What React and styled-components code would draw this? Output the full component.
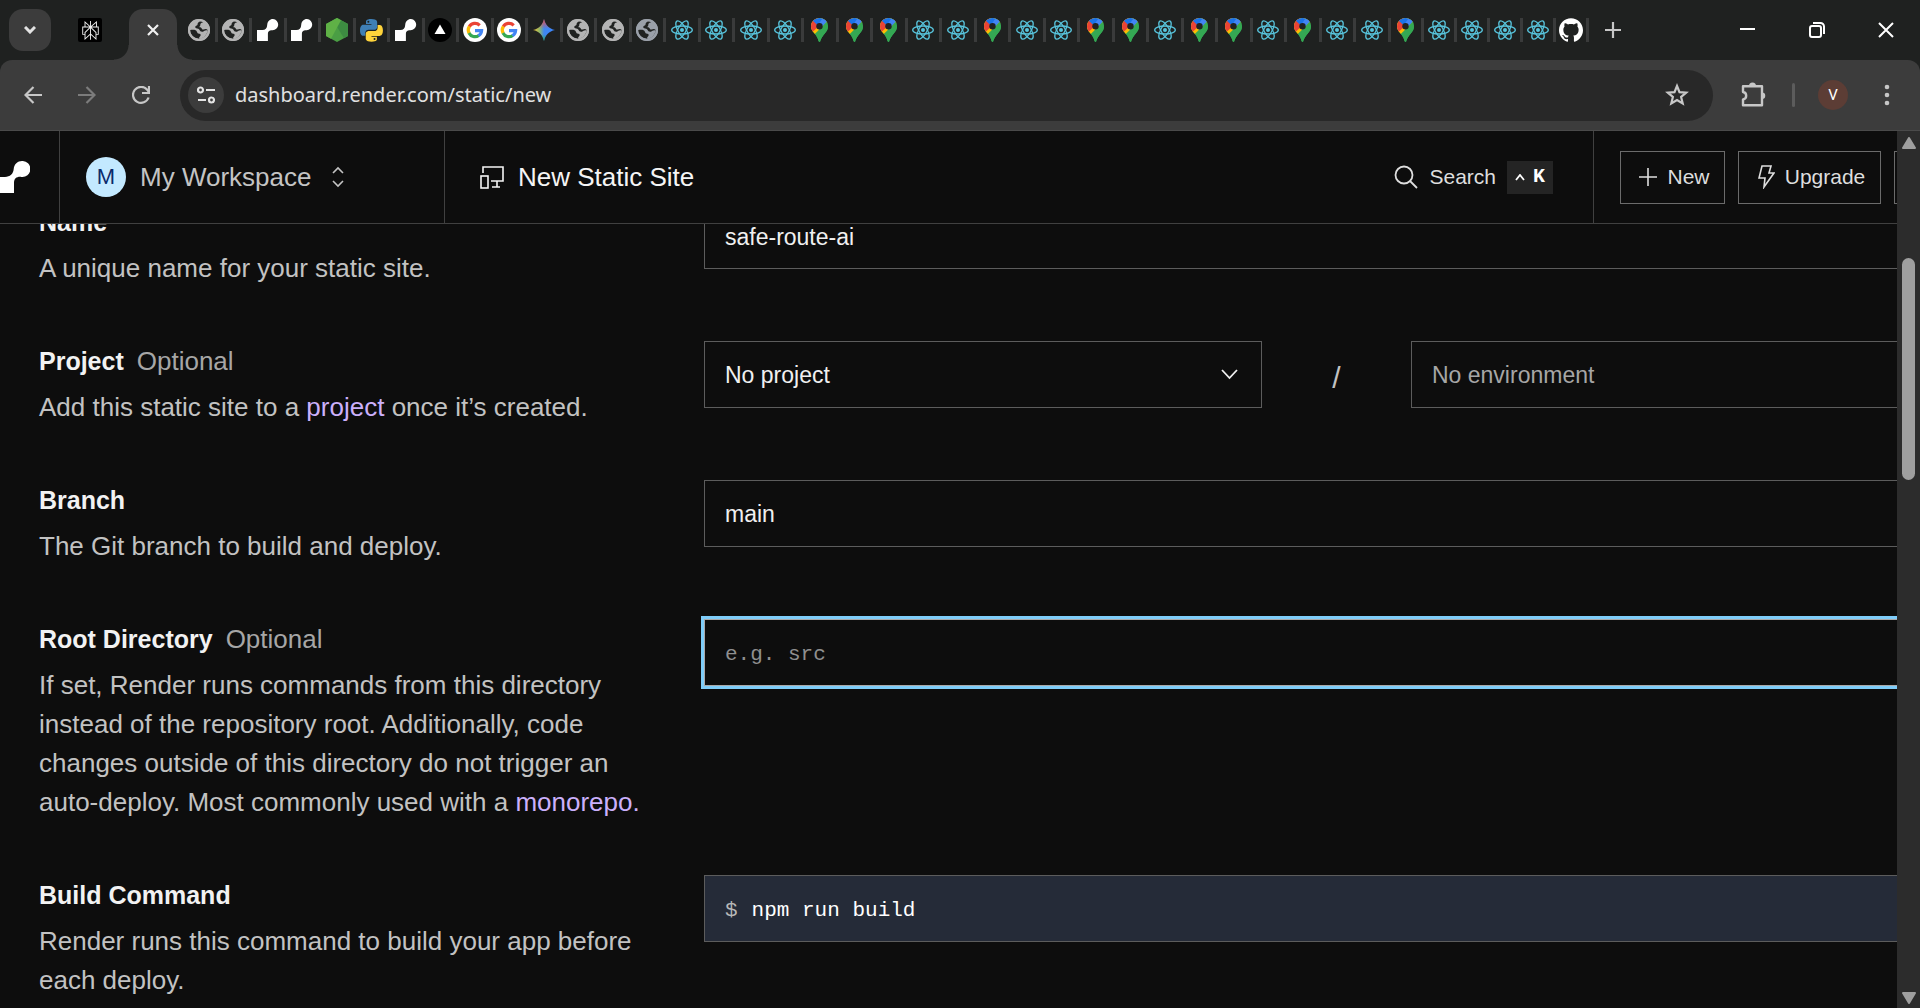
import React from "react";
import styled, { createGlobalStyle, css } from "styled-components";
import { SiPerplexity, SiGithub } from "react-icons/si";

const sans = '"Liberation Sans", Arial, Helvetica, sans-serif';
const mono = '"Liberation Mono", "Courier New", monospace';
const chromeFont = '"Noto Sans", "Open Sans", sans-serif';

const GlobalStyle = createGlobalStyle`
  * { box-sizing: border-box; }
  body { margin: 0; background: #0d0d0d; overflow: hidden; }
  button, input, select { font: inherit; color: inherit; margin: 0; }
  svg { display: block; flex: none; }
`;

const Window = styled.div`
  display: flex;
  flex-direction: column;
  height: 100vh;
  overflow: hidden;
  background: #0d0d0d;
  font-family: ${sans};
`;

/* ---------- browser tab strip ---------- */

const TabStrip = styled.header`
  display: flex;
  flex: none;
  height: 60px;
  padding-left: 9px;
  background: #1f2120;
`;

const BareButton = styled.button`
  display: flex;
  align-items: center;
  justify-content: center;
  flex: none;
  padding: 0;
  border: 0;
  background: none;
  color: ${(p) => p.$color || "#c7c7c7"};
  width: ${(p) => p.$w}px;
`;

const TabSearch = styled(BareButton)`
  height: 42px;
  margin-top: 9px;
  border-radius: 14px;
  background: #3c3c3c;
`;

const PinnedTab = styled(BareButton)`
  height: 60px;
`;

const PinnedIcon = styled.span`
  display: grid;
  place-items: center;
  width: 24px;
  height: 24px;
  border-radius: 2px;
  background: #000;
`;

const ActiveTab = styled.div`
  position: relative;
  display: flex;
  justify-content: center;
  flex: none;
  width: 48px;
  height: 51px;
  margin: 9px 6px 0 0;
  border-radius: 14px 14px 0 0;
  background: #3c3c3c;

  &::before,
  &::after {
    content: "";
    position: absolute;
    bottom: 0;
    width: 15px;
    height: 15px;
  }
  &::before {
    right: 100%;
    background: radial-gradient(circle at 0 0, transparent 14px, #3c3c3c 15px);
  }
  &::after {
    left: 100%;
    background: radial-gradient(circle at 100% 0, transparent 14px, #3c3c3c 15px);
  }
`;

const CloseTab = styled(BareButton)`
  height: 42px;
`;

const Tabs = styled.nav`
  display: flex;
  flex: 1;
  min-width: 0;
  height: 24px;
  margin-top: 18px;
`;

const Tab = styled.button`
  display: flex;
  align-items: center;
  justify-content: center;
  flex: ${(p) => (p.$narrow ? 66 : 69)} 1 0;
  min-width: 0;
  height: 24px;
  padding: 0;
  border: 0;
  border-right: 3px solid #3a3b3b;
  background: none;
`;

const WindowButtons = styled.div`
  display: flex;
  gap: 0;
  flex: none;
`;

const NewTab = styled(BareButton)`
  margin-right: 76px;
`;

/* ---------- browser toolbar ---------- */

const Backdrop = styled.div`
  flex: none;
  background: #1f2120;
`;

const Toolbar = styled.div`
  display: flex;
  align-items: center;
  height: 71px;
  padding: 0 6px;
  border-bottom: 1px solid #4a4a4a;
  border-radius: 12px 12px 0 0;
  background: #3c3c3c;
`;

const AddressBar = styled.div`
  display: flex;
  align-items: center;
  flex: 1;
  height: 51px;
  margin: 0 13px 0 12px;
  padding: 0 8px;
  border-radius: 26px;
  background: #282828;
`;

const SiteInfo = styled(BareButton)`
  height: 36px;
  border-radius: 50%;
  background: #3c3c3c;
`;

const AddressInput = styled.input`
  flex: 1;
  min-width: 0;
  padding: 0 11px;
  border: 0;
  outline: 0;
  background: none;
  color: #e0e0e0;
  font: 20px/28px ${chromeFont};
`;

const ToolbarDivider = styled.span`
  width: 3px;
  height: 24px;
  margin: 0 11px 0 12px;
  border-radius: 2px;
  background: #5c5c5c;
`;

const Profile = styled.span`
  display: grid;
  place-items: center;
  width: 30px;
  height: 30px;
  border-radius: 50%;
  background: #5c3d35;
  color: #fff;
  font: 15px/20px Roboto, sans-serif;
`;

/* ---------- page ---------- */

const Viewport = styled.div`
  display: flex;
  flex: 1;
  min-height: 0;
`;

const Page = styled.div`
  display: flex;
  flex-direction: column;
  flex: 1;
  min-width: 0;
  overflow: hidden;
`;

const Header = styled.header`
  display: flex;
  flex: none;
  height: 93px;
  border-bottom: 1px solid #404040;
  background: #0d0d0d;
  color: #f5f5f5;
`;

const LogoCell = styled.a`
  display: flex;
  align-items: center;
  flex: none;
  width: 60px;
  border-right: 1px solid #404040;
`;

const Workspace = styled.button`
  display: flex;
  align-items: center;
  flex: none;
  width: 385px;
  padding: 0 26px;
  border: 0;
  border-right: 1px solid #404040;
  background: none;
  color: #c4c4c4;
  font-size: 26px;
  line-height: 40px;
`;

const Initial = styled.span`
  display: grid;
  place-items: center;
  width: 40px;
  height: 40px;
  margin-right: 14px;
  border-radius: 50%;
  background: #c3e9ff;
  color: #0a2a6b;
  font-size: 22px;
  line-height: 40px;
`;

const SortIcon = styled.svg`
  margin-left: 20px;
`;

const Title = styled.h1`
  display: flex;
  align-items: center;
  gap: 13px;
  flex: 1;
  margin: 0;
  padding-left: 35px;
  font-size: 26px;
  font-weight: 400;
  line-height: 40px;
`;

const Search = styled.button`
  display: flex;
  align-items: center;
  gap: 11px;
  padding: 0 40px 0 0;
  border: 0;
  border-right: 1px solid #404040;
  background: none;
  color: #dedede;
  font-size: 21px;
`;

const Shortcut = styled.kbd`
  display: flex;
  align-items: center;
  justify-content: center;
  gap: 8px;
  width: 46px;
  height: 33px;
  background: #242424;
  color: #fff;
  font: 700 20px/24px ${mono};
`;

const Actions = styled.div`
  display: flex;
  align-items: center;
  gap: 13px;
  flex: none;
  width: 303px;
  padding-left: 26px;
  overflow: hidden;
`;

const ActionButton = styled.button`
  display: flex;
  align-items: center;
  justify-content: center;
  gap: 10px;
  flex: none;
  width: ${(p) => p.$w}px;
  height: 53px;
  padding: 0 0 0 4px;
  border: 1px solid #6b6b6b;
  background: none;
  color: #dedede;
  font-size: 21px;
`;

/* ---------- form ---------- */

const Main = styled.main`
  flex: 1;
  min-height: 0;
  overflow: hidden;
`;

/* scrolled down far enough that the first row slips under the header */
const Form = styled.form`
  display: grid;
  row-gap: 54px;
  width: calc(100% + 111px);
  margin-top: -22px;
  padding: 0 39px;
`;

const Row = styled.div`
  display: grid;
  grid-template-columns: 610px 1fr;
  column-gap: 55px;
  align-items: start;
`;

const Copy = styled.div`
  display: grid;
  row-gap: 7px;
  padding-top: 1px;
  margin-bottom: -1px;
  color: #c2c2c2;
  font-size: 26px;
  line-height: 39px;
`;

const Label = styled.label`
  color: #f2f2f2;
  font-size: 25px;
  font-weight: 700;
`;

const Optional = styled.span`
  margin-left: 13px;
  color: #a6a6a6;
  font-size: 26px;
  font-weight: 400;
`;

const Description = styled.p`
  margin: 0;
`;

const Link = styled.a`
  color: #cbb0fb;
  text-decoration: none;
`;

const fieldBox = css`
  display: block;
  width: 100%;
  height: 67px;
  padding: 0 20px;
  border: 1px solid #5c5c5c;
  border-radius: 0;
  outline: 0;
  background: #0d0d0d;
  color: #f0f0f0;
`;

const TextField = styled.input`
  ${fieldBox}
  padding-top: 4px;
  font: ${(p) => (p.$mono ? `21px/32px ${mono}` : `23px/32px ${sans}`)};
  ${(p) => p.$focused && "border-color: #a9a9a9; box-shadow: 0 0 0 3px #7fcdf9;"}

  &::placeholder {
    color: #8f8f8f;
    opacity: 1;
  }
`;

const Pickers = styled.div`
  display: grid;
  grid-template-columns: 1fr 149px 1fr;
  align-items: center;
`;

const Slash = styled.span`
  padding-top: 6px;
  color: #c2c2c2;
  font-size: 30px;
  text-align: center;
`;

const SelectWrap = styled.div`
  position: relative;
  color: #f0f0f0;
`;

const Select = styled.select`
  ${fieldBox}
  appearance: none;
  color: ${(p) => (p.$muted ? "#a6a6a6" : "#f0f0f0")};
  opacity: 1;
  font: 23px/32px ${sans};
`;

const SelectArrow = styled.svg`
  position: absolute;
  top: 28px;
  right: 24px;
  pointer-events: none;
`;

const Command = styled.div`
  display: flex;
  align-items: center;
  gap: 14px;
  height: 67px;
  padding: 4px 0 0 20px;
  border: 1px solid #5c5c5c;
  background: #252b38;
  color: #b8b8b8;
  font: 21px/32px ${mono};
`;

const CommandInput = styled.input`
  flex: 1;
  min-width: 0;
  padding: 0;
  border: 0;
  outline: 0;
  background: none;
  color: #fff;
`;

/* ---------- scrollbar ---------- */

const Scrollbar = styled.div`
  display: flex;
  flex-direction: column;
  align-items: center;
  flex: none;
  width: 23px;
  padding: 6px 0 4px;
  background: #2c2c2c;
`;

const Thumb = styled.div`
  width: 13px;
  height: 222px;
  margin: 109px 0 auto;
  border-radius: 7px;
  background: #9f9f9f;
`;

/* ---------- drawings ---------- */

const Stroke = ({ w, h = w, box, sw = 2, children, as: Tag = "svg", ...rest }) => (
  <Tag
    width={w}
    height={h}
    viewBox={box || `0 0 ${w} ${h}`}
    fill="none"
    stroke="currentColor"
    strokeWidth={sw}
    aria-hidden="true"
    {...rest}
  >
    {children}
  </Tag>
);

const Globe = ({ color = "#b4b4b4" }) => (
  <svg width="22" height="22" viewBox="0 0 22 22" aria-hidden="true">
    <circle cx="11" cy="11" r="11" fill={color} />
    <path
      d="M13.500 2.300C11 2.500 9.500 3.800 9.500 5.500c0 .8-.6 1-1.300 1.200C7 7 6.800 9 8.200 9.300c1.500.3 2.500.2 3.200 1.500.6 1.300 1.300 2 2.700 2 1.300 0 2-1 3.300-1.300 1.200-.3 2.300-.2 2.400.5-.8 4-4 7.300-8.300 7.700-.6-.8-.4-1.700.5-2.300 1.200-.9.800-2.400-.7-2.600-1.600-.2-1.900-.9-2.400-2.100-.7-1.700-2.500-2.200-6.700-1.700-.1 2 .6 4 2 5.600 1.800 2 4 2.800 7.100 3.100 2-.1 4-1 5.500-2.500 1.700-1.700 2.700-3.800 2.900-6.200-1.200-1.500-2.700-1.100-4-.6-1.300.5-1.600-.2-2.100-1.100-.6-1.100-1.600-1.100-2.500-1.300 1.100-.4 1.200-1.400 1.200-2.500 0-1.300 1.500-1.700 3-2.200z"
      fill="#202221"
    />
    <circle cx="11" cy="11" r="10" fill="none" stroke={color} strokeWidth="2" />
  </svg>
);

const RenderMark = ({ size = 22 }) => (
  <svg width={size} height={size} viewBox="0 0 22 22" fill="#fff" aria-hidden="true">
    <path d="M16 0a5.600 5.600 0 1 1-.8 11.200c-2.600-.3-4.300 1-4.300 3.600V22H0V11h5.400c3 0 4.600-1.900 4.800-5.100C10.400 2.600 12.800 0 16 0z" />
  </svg>
);

const Node = () => (
  <svg width="22" height="24" viewBox="0 0 22 24" aria-hidden="true">
    <path d="M11 0l11 6v12l-11 6-11-6V6z" fill="#4a9e44" />
    <path d="M11 0l11 6v12l-4 2.200L7 2.200z" fill="#3d8b41" />
    <path d="M11 0L0 6v12l5 2.700L15 2.200z" fill="#5fb146" />
  </svg>
);

const Python = () => (
  <svg width="23" height="23" viewBox="0 0 110 110" aria-hidden="true">
    <path
      fill="#3f7fb5"
      d="M54 0C27 0 28.700 11.800 28.700 11.800v12.300h26v3.700H18.200S0 25.800 0 54s15.900 26.500 15.900 26.500h9.500V67.200s-.5-15.900 15.600-15.900h26s15.100.2 15.100-14.600V15.200S84.400 0 54 0zM40 8.300a4.700 4.700 0 1 1 0 9.400 4.700 4.700 0 0 1 0-9.400z"
    />
    <path
      fill="#ffd43b"
      d="M55.600 109c27 0 25.300-11.800 25.300-11.800V84.900h-26v-3.700h36.500s18.200 2 18.200-26.200-15.900-26.500-15.900-26.500h-9.500v13.300s.5 15.900-15.600 15.900h-26s-15.100-.2-15.100 14.600v21.500S25.200 109 55.600 109zm14-8.300a4.700 4.700 0 1 1 0-9.400 4.700 4.700 0 0 1 0 9.400z"
    />
  </svg>
);

const Vercel = () => (
  <svg width="24" height="24" viewBox="0 0 24 24" aria-hidden="true">
    <circle cx="12" cy="12" r="12" fill="#000" />
    <path d="M12 6.500 17.500 16h-11z" fill="#fff" />
  </svg>
);

const Google = () => (
  <svg width="24" height="24" viewBox="0 0 24 24" fill="none" strokeWidth="3.200" aria-hidden="true">
    <circle cx="12" cy="12" r="12" fill="#fff" />
    <path d="M16.700 7.300A6.700 6.700 0 0 0 6.200 8.700" stroke="#ea4335" />
    <path d="M6.400 8.400a6.700 6.700 0 0 0-.2 6.900" stroke="#fbbc05" />
    <path d="M6 15a6.700 6.700 0 0 0 9.800 2.500" stroke="#34a853" />
    <path d="M15.500 17.700c2-1.400 3-3.200 3.100-5.100H12" stroke="#4285f4" />
  </svg>
);

const Gemini = () => (
  <svg width="22" height="22" viewBox="0 0 22 22" aria-hidden="true">
    <defs>
      <linearGradient id="gem-x" x1="0" x2="1">
        <stop offset="0" stopColor="#f6c02c" />
        <stop offset=".3" stopColor="#8fb86a" />
        <stop offset=".5" stopColor="#3f87f0" />
        <stop offset="1" stopColor="#3b86ff" />
      </linearGradient>
      <linearGradient id="gem-y" x1="0" y1="0" x2="0" y2="1">
        <stop offset="0" stopColor="#f3483e" />
        <stop offset=".45" stopColor="#f3483e" stopOpacity="0" />
        <stop offset=".7" stopColor="#1fa85a" stopOpacity="0" />
        <stop offset="1" stopColor="#1fa85a" />
      </linearGradient>
    </defs>
    {["gem-x", "gem-y"].map((id) => (
      <path key={id} fill={`url(#${id})`} d="M11 0c1.300 6 5 9.700 11 11-6 1.300-9.700 5-11 11-1.300-6-5-9.700-11-11 6-1.300 9.700-5 11-11z" />
    ))}
  </svg>
);

const ReactMark = () => (
  <svg width="24" height="24" viewBox="-12 -12 24 24" fill="none" stroke="#58c4dc" strokeWidth="1.300" aria-hidden="true">
    <circle r="2" fill="#58c4dc" stroke="none" />
    {[0, 60, 120].map((a) => (
      <ellipse key={a} rx="10.300" ry="4" transform={`rotate(${a})`} />
    ))}
  </svg>
);

const MapsPin = () => (
  <svg width="17" height="24" viewBox="0 0 17 24" aria-hidden="true">
    <defs>
      <clipPath id="pin">
        <path d="M8.500 0A8.300 8.300 0 0 1 17 8.300c0 3-1.200 4.900-3.200 7.300-2 2.300-3.500 4.400-4.300 7.400-.3 1.300-1.700 1.300-2 0-.8-3-1.900-4.800-4-7.400C1.300 13 0 11.300 0 8.300A8.300 8.300 0 0 1 8.500 0z" />
      </clipPath>
    </defs>
    <g clipPath="url(#pin)">
      <path d="M0 0h17v24H0z" fill="#34a853" />
      <path d="M0 0h17v4.500L3 17 0 13z" fill="#fbbc04" />
      <path d="M0 0h6l3 7-7.500 7L0 12z" fill="#ea4335" />
      <path d="M1.500 2.500 8.500 9l8-6L12 0H4z" fill="#1a73e8" />
      <path d="M11.500.500 16 3.500 8.500 12 5.500 9z" fill="#4285f4" />
      <path d="M16 3.500 17 8v5l-9 11-5-7z" fill="#34a853" />
    </g>
    <circle cx="8.500" cy="8.300" r="3.200" fill="#202221" />
  </svg>
);

const Github = () => <SiGithub size={24} color="#fff" />;

const icons = {
  g: ["New tab", Globe],
  b: ["Local page", () => <Globe color="#9aa0a9" />],
  r: ["Render", RenderMark],
  n: ["Node.js", Node],
  p: ["Python", Python],
  v: ["Vercel", Vercel],
  G: ["Google", Google],
  s: ["Gemini", Gemini],
  R: ["React", ReactMark],
  M: ["Google Maps", MapsPin],
  h: ["GitHub", Github],
};

const openTabs = [..."ggrrnprvGGsggbRRRRMMMRRMRRMMRMMRMRRMRRRRh"];

const TabIcons = () =>
  openTabs.map((key, i) => {
    const [name, Icon] = icons[key];
    return (
      <Tab key={i} type="button" aria-label={name} $narrow={i > 34}>
        <Icon />
      </Tab>
    );
  });

const BrowserChrome = () => (
  <>
    <TabStrip>
      <TabSearch $w={42} $color="#e3e3e3" type="button" aria-label="Search tabs">
        <Stroke w={12} h={8} sw={3}>
          <path d="M1 1l5 5 5-5" />
        </Stroke>
      </TabSearch>
      <PinnedTab $w={78} type="button" aria-label="Perplexity">
        <PinnedIcon>
          <SiPerplexity size={19} color="#f2f2f2" />
        </PinnedIcon>
      </PinnedTab>
      <ActiveTab>
        <CloseTab $w={42} $color="#f0f0f0" type="button" aria-label="Close tab">
          <Stroke w={12} sw={2.2}>
            <path d="M1 1l10 10M11 1L1 11" />
          </Stroke>
        </CloseTab>
      </ActiveTab>
      <Tabs aria-label="Open tabs">
        <TabIcons />
      </Tabs>
      <WindowButtons>
        <NewTab $w={48} type="button" aria-label="New tab">
          <Stroke w={16} sw={2.2}>
            <path d="M8 0v16M0 8h16" />
          </Stroke>
        </NewTab>
        <BareButton $w={69} $color="#fff" type="button" aria-label="Minimize">
          <Stroke w={15} h={4}>
            <path d="M0 1h15" />
          </Stroke>
        </BareButton>
        <BareButton $w={69} $color="#fff" type="button" aria-label="Restore">
          <Stroke w={16}>
            <rect x="1" y="4" width="11" height="11" rx="2" />
            <path d="M4 1h7.500A3.500 3.500 0 0 1 15 4.500V12" />
          </Stroke>
        </BareButton>
        <BareButton $w={69} $color="#fff" type="button" aria-label="Close">
          <Stroke w={16}>
            <path d="M1 1l14 14M15 1L1 15" />
          </Stroke>
        </BareButton>
      </WindowButtons>
    </TabStrip>
    <Backdrop>
      <Toolbar>
        <BareButton $w={54} type="button" aria-label="Back">
          <Stroke w={18} sw={2.2}>
            <path d="M18 9H2M9.500 1L1.500 9l8 8" />
          </Stroke>
        </BareButton>
        <BareButton $w={54} $color="#7c7c7c" type="button" aria-label="Forward">
          <Stroke w={18} sw={2.2}>
            <path d="M0 9h16M8.500 1l8 8-8 8" />
          </Stroke>
        </BareButton>
        <BareButton $w={54} type="button" aria-label="Reload">
          <Stroke w={18} sw={2.2}>
            <path d="M16.600 11.500A8 8 0 1 1 15 3.500l2 2.500" />
            <path d="M17 0v7h-7" />
          </Stroke>
        </BareButton>
        <AddressBar>
          <SiteInfo $w={36} $color="#e3e3e3" type="button" aria-label="View site information">
            <Stroke w={18} h={18} sw={2.2}>
              <circle cx="3.500" cy="4" r="2.500" />
              <path d="M9 4h9M1 14h8" />
              <circle cx="14.500" cy="14" r="2.500" />
            </Stroke>
          </SiteInfo>
          <AddressInput aria-label="Address" defaultValue="dashboard.render.com/static/new" />
          <BareButton $w={56} type="button" aria-label="Bookmark this page">
            <Stroke w={24} sw={2.2}>
              <path d="M12 3l2.500 6.200 6.700.5-5.100 4.300 1.600 6.500L12 17l-5.700 3.500 1.600-6.500-5.100-4.300 6.700-.5z" />
            </Stroke>
          </BareButton>
        </AddressBar>
        <BareButton $w={54} type="button" aria-label="Extensions">
          <Stroke w={26} sw={2.4}>
            <path d="M3 4.200h19v19H3v-5.700a3.800 3.800 0 0 0 0-7.500z" strokeLinejoin="round" />
            <path d="M9 4a3.500 3.500 0 0 1 7 0zM22 10.500a3.200 3.200 0 0 1 0 6.500z" fill="currentColor" stroke="none" />
          </Stroke>
        </BareButton>
        <ToolbarDivider />
        <BareButton $w={54} type="button" aria-label="Profile">
          <Profile>V</Profile>
        </BareButton>
        <BareButton $w={54} type="button" aria-label="Menu">
          <svg width="6" height="22" viewBox="0 0 6 22" fill="currentColor" aria-hidden="true">
            <circle cx="3" cy="3" r="2.300" />
            <circle cx="3" cy="11" r="2.300" />
            <circle cx="3" cy="19" r="2.300" />
          </svg>
        </BareButton>
      </Toolbar>
    </Backdrop>
  </>
);

const FormRow = ({ id, label, optional, description, children }) => (
  <Row>
    <Copy>
      <Label htmlFor={id}>
        {label}
        {optional && <Optional>Optional</Optional>}
      </Label>
      <Description>{description}</Description>
    </Copy>
    {children}
  </Row>
);

const PageHeader = () => (
  <Header>
    <LogoCell href="#home" aria-label="Render">
      <svg width="30" height="32" viewBox="0 0 30 32" fill="#fff" aria-hidden="true">
        <path d="M22 0a8 8 0 1 1-.8 15.900c-4.500-.4-7.200 1.600-7.200 6V32H0V16h5c5-.3 8.300-3 8.700-8C14.100 3 17.600 0 22 0z" />
      </svg>
    </LogoCell>
    <Workspace type="button">
      <Initial>M</Initial>
      My Workspace
      <Stroke as={SortIcon} w={14} h={22} sw={1.6}>
        <path d="M2 7l5-5 5 5M2 15l5 5 5-5" />
      </Stroke>
    </Workspace>
    <Title>
      <Stroke w={25} h={23} sw={1.6}>
        <path d="M3 7V1h20v14H11M17 15v6M12 21h8" />
        <rect x="1" y="10" width="7" height="12" />
      </Stroke>
      New Static Site
    </Title>
    <Search type="button">
      <Stroke w={24} sw={1.8}>
        <circle cx="10" cy="10" r="8.500" />
        <path d="M16 16l7 7" />
      </Stroke>
      Search
      <Shortcut>
        <Stroke w={10} h={7} sw={1.8}>
          <path d="M1 6l4-5 4 5" />
        </Stroke>
        K
      </Shortcut>
    </Search>
    <Actions>
      <ActionButton type="button" $w={105}>
        <Stroke w={18} sw={1.6}>
          <path d="M9 0v18M0 9h18" />
        </Stroke>
        New
      </ActionButton>
      <ActionButton type="button" $w={143}>
        <Stroke w={17} h={24} sw={1.6}>
          <path d="M4 1h9l-2 7h5L6 22l1-9H1z" />
        </Stroke>
        Upgrade
      </ActionButton>
      <ActionButton type="button" $w={53} aria-label="Help" />
    </Actions>
  </Header>
);

export default function App() {
  return (
    <Window>
      <GlobalStyle />
      <BrowserChrome />
      <Viewport>
        <Page>
          <PageHeader />
          <Main>
            <Form>
              <FormRow id="name" label="Name" description="A unique name for your static site.">
                <TextField id="name" defaultValue="safe-route-ai" />
              </FormRow>
              <FormRow
                id="project"
                label="Project"
                optional
                description={
                  <>
                    Add this static site to a <Link href="#projects">project</Link> once it’s created.
                  </>
                }
              >
                <Pickers>
                  <SelectWrap>
                    <Select id="project">
                      <option>No project</option>
                    </Select>
                    <Stroke as={SelectArrow} w={17} h={11} sw={1.8}>
                      <path d="M1 1l7.500 8L16 1" />
                    </Stroke>
                  </SelectWrap>
                  <Slash>/</Slash>
                  <Select $muted disabled aria-label="Environment">
                    <option>No environment</option>
                  </Select>
                </Pickers>
              </FormRow>
              <FormRow id="branch" label="Branch" description="The Git branch to build and deploy.">
                <Select id="branch">
                  <option>main</option>
                </Select>
              </FormRow>
              <FormRow
                id="root-directory"
                label="Root Directory"
                optional
                description={
                  <>
                    If set, Render runs commands from this directory instead of the repository root. Additionally, code
                    changes outside of this directory do not trigger an auto-deploy. Most commonly used with a{" "}
                    <Link href="#monorepo">monorepo.</Link>
                  </>
                }
              >
                <TextField id="root-directory" placeholder="e.g. src" $mono $focused />
              </FormRow>
              <FormRow
                id="build-command"
                label="Build Command"
                description="Render runs this command to build your app before each deploy."
              >
                <Command>
                  $
                  <CommandInput id="build-command" defaultValue="npm run build" />
                </Command>
              </FormRow>
            </Form>
          </Main>
        </Page>
        <Scrollbar aria-hidden="true">
          <svg width="14" height="12" viewBox="0 0 14 12" fill="#9f9f9f" stroke="#9f9f9f" strokeWidth="2" strokeLinejoin="round">
            <path d="M7 1l6 10H1z" />
          </svg>
          <Thumb />
          <svg width="14" height="12" viewBox="0 0 14 12" fill="#9f9f9f" stroke="#9f9f9f" strokeWidth="2" strokeLinejoin="round">
            <path d="M1 1h12L7 11z" />
          </svg>
        </Scrollbar>
      </Viewport>
    </Window>
  );
}
